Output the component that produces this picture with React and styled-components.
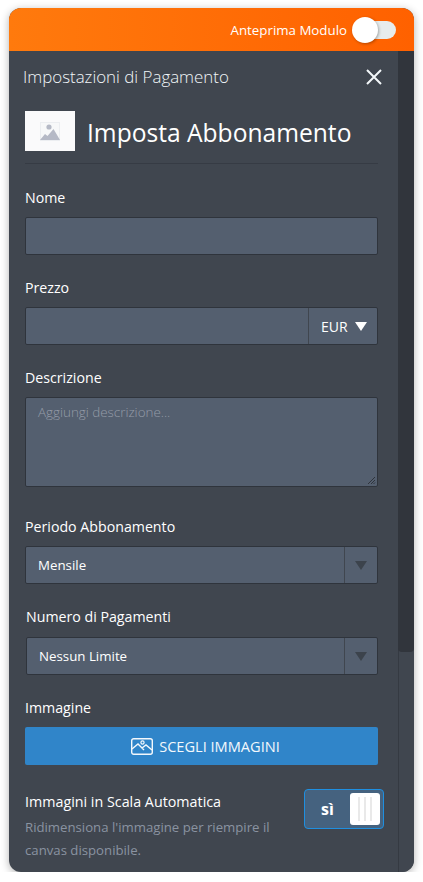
import React from 'react';
import styled, { createGlobalStyle } from 'styled-components';

const GlobalStyle = createGlobalStyle`
  html, body {
    margin: 0;
    padding: 0;
    background: #fff;
  }
  * {
    box-sizing: border-box;
  }
`;

const Card = styled.div`
  width: 405px;
  height: 864px;
  margin: 8px 0 0 9px;
  border-radius: 12px;
  overflow: hidden;
  display: flex;
  flex-direction: column;
  background: #40464f;
  box-shadow: 0 2px 8px rgba(0, 0, 0, 0.3);
  font-family: "Open Sans", "Noto Sans", sans-serif;
  color: #fff;
`;

const TopBar = styled.div`
  height: 43px;
  flex: none;
  display: flex;
  align-items: center;
  justify-content: flex-end;
  gap: 5px;
  padding-right: 18px;
  background: linear-gradient(90deg, #ff7a0d 0%, #ff6100 100%);
  font-size: 13.3px;
`;

const PreviewToggle = styled.div`
  position: relative;
  width: 44px;
  height: 26px;
  display: flex;
  align-items: center;
  justify-content: flex-end;
`;

const PreviewTrack = styled.div`
  width: 36px;
  height: 18px;
  border-radius: 9px;
  background: #e7ecec;
`;

const PreviewKnob = styled.div`
  position: absolute;
  left: 0;
  top: 0;
  width: 26px;
  height: 26px;
  border-radius: 50%;
  background: #fff;
  box-shadow: 1px 1px 3px rgba(0, 0, 0, 0.3);
`;

const Body = styled.div`
  flex: 1;
  display: flex;
  min-height: 0;
`;

const Content = styled.div`
  flex: 1;
  min-width: 0;
  padding: 0 20px 0 16px;
`;

const ScrollTrack = styled.div`
  width: 16px;
  flex: none;
  background: #40464f;
  border-left: 1px solid #353a42;
`;

const ScrollThumb = styled.div`
  height: 601px;
  margin-left: -1px;
  background: #31353c;
  border-radius: 0 0 4px 4px;
`;

const PanelHeader = styled.div`
  height: 52px;
  display: flex;
  align-items: center;
  justify-content: space-between;
  margin-left: -2px;
  margin-right: -4px;
`;

const PanelTitle = styled.div`
  font-size: 16.9px;
  font-weight: 300;
  padding-bottom: 2px;
  color: #f2f6f9;
`;

const CloseButton = styled.div`
  display: flex;
  width: 16px;
  height: 16px;
`;

const Heading = styled.div`
  height: 53px;
  margin-top: 8px;
  padding-bottom: 12px;
  display: flex;
  align-items: center;
  gap: 12px;
  border-bottom: 1px solid #363b44;
`;

const Thumb = styled.div`
  width: 50px;
  height: 40px;
  background: #fafafb;
  display: flex;
  align-items: center;
  justify-content: center;
`;

const HeadingText = styled.div`
  font-size: 24.6px;
  line-height: 32px;
  margin-top: 4px;
  white-space: nowrap;
`;

const Field = styled.div`
  margin-top: ${(p) => p.$top}px;
  margin-left: ${(p) => p.$left || 0}px;
`;

const Label = styled.div`
  font-size: 14.2px;
  line-height: 20px;
  margin-bottom: ${(p) => p.$gap || 9}px;
  color: #fff;
`;

const InputBox = styled.div`
  height: ${(p) => p.$height || 38}px;
  background: #545f6f;
  border: 1px solid #2f343c;
  border-radius: 2px;
  display: flex;
  align-items: stretch;
`;

const InputText = styled.div`
  flex: 1;
  display: flex;
  align-items: center;
  padding-left: 12px;
  font-size: 13.3px;
`;

const CurrencyBox = styled.div`
  width: 69px;
  flex: none;
  border-left: 1px solid #40464f;
  display: flex;
  align-items: center;
  gap: 7px;
  padding-left: 12px;
  font-size: 14px;
`;

const SelectArrow = styled.div`
  width: 33px;
  flex: none;
  border-left: 1px solid #40464f;
  display: flex;
  align-items: center;
  justify-content: center;
`;

const Triangle = styled.div`
  width: 0;
  height: 0;
  border-left: 6px solid transparent;
  border-right: 6px solid transparent;
  border-top: 9px solid ${(p) => p.$color};
`;

const TextArea = styled(InputBox)`
  position: relative;
  padding: 4px 12px;
  font-size: 13.4px;
  line-height: 20px;
  color: #959ca8;
  font-weight: 300;
`;

const ResizeGrip = styled.svg`
  position: absolute;
  right: 1px;
  bottom: 1px;
`;

const ChooseButton = styled.div`
  height: 38px;
  padding-left: 8px;
  background: #3085c9;
  border-radius: 2px;
  display: flex;
  align-items: center;
  justify-content: center;
  gap: 6px;
  font-size: 14.6px;
  color: #f3f8fc;
`;

const ToggleRow = styled.div`
  margin-top: 27px;
  margin-right: -6px;
  display: flex;
  align-items: flex-start;
  justify-content: space-between;
`;

const ToggleText = styled.div`
  width: 270px;
`;

const ToggleTitle = styled.div`
  font-size: 14.3px;
  line-height: 20px;
  color: #fff;
`;

const ToggleHint = styled.div`
  margin-top: 4px;
  font-size: 13.2px;
  line-height: 23px;
  color: #8a93a1;
`;

const YesToggle = styled.div`
  width: 80px;
  height: 40px;
  margin-top: -3px;
  padding: 3px;
  background: #45627f;
  border: 1px solid #1f8fe0;
  border-radius: 4px;
  display: flex;
  align-items: center;
  font-size: 16px;
  font-weight: 700;
`;

const YesLabel = styled.div`
  flex: 1;
  text-align: center;
  padding-right: 3px;
`;

const YesKnob = styled.div`
  width: 30px;
  height: 32px;
  background: #fff;
  border-radius: 3px;
  display: flex;
  align-items: center;
  justify-content: center;
  gap: 4px;
`;

const KnobLine = styled.div`
  width: 2px;
  height: 24px;
  background: #e9e9e9;
`;

function SelectField({ label, value, top, left, gap }) {
  return (
    <Field $top={top} $left={left}>
      <Label $gap={gap}>{label}</Label>
      <InputBox>
        <InputText>{value}</InputText>
        <SelectArrow>
          <Triangle $color="#3c434c" />
        </SelectArrow>
      </InputBox>
    </Field>
  );
}

export default function App() {
  return (
    <>
      <GlobalStyle />
      <Card>
        <TopBar>
          Anteprima Modulo
          <PreviewToggle>
            <PreviewTrack />
            <PreviewKnob />
          </PreviewToggle>
        </TopBar>
        <Body>
          <Content>
            <PanelHeader>
              <PanelTitle>Impostazioni di Pagamento</PanelTitle>
              <CloseButton>
                <svg width="16" height="16" viewBox="0 0 16 16">
                  <path d="M1 1l14 14M15 1L1 15" stroke="#f3f7fa" strokeWidth="2" fill="none" />
                </svg>
              </CloseButton>
            </PanelHeader>
            <Heading>
              <Thumb>
                <svg width="20" height="19" viewBox="0 0 20 19">
                  <rect x="0" y="0" width="20" height="19" fill="#eceef1" />
                  <rect x="1" y="1" width="18" height="17" fill="#f7f8f9" />
                  <path d="M0 18l5-6 2.500 2 6-7 6.500 11z" fill="#b5b9c6" />
                  <circle cx="9" cy="5" r="2.600" fill="#b5b9c6" />
                </svg>
              </Thumb>
              <HeadingText>Imposta Abbonamento</HeadingText>
            </Heading>
            <Field $top={24}>
              <Label>Nome</Label>
              <InputBox />
            </Field>
            <Field $top={23}>
              <Label>Prezzo</Label>
              <InputBox>
                <InputText />
                <CurrencyBox>
                  EUR
                  <Triangle $color="#fff" />
                </CurrencyBox>
              </InputBox>
            </Field>
            <Field $top={23}>
              <Label>Descrizione</Label>
              <TextArea $height={90}>
                Aggiungi descrizione...
                <ResizeGrip width="9" height="9" viewBox="0 0 9 9">
                  <path d="M8 1L1 8M8 4L4 8M8 6.500L6.500 8" stroke="#2f343c" strokeWidth="1" />
                </ResizeGrip>
              </TextArea>
            </Field>
            <SelectField label="Periodo Abbonamento" value="Mensile" top={30} />
            <SelectField label="Numero di Pagamenti" value="Nessun Limite" top={23} left={1} gap={10} />
            <Field $top={23}>
              <Label>Immagine</Label>
              <ChooseButton>
                <svg width="22" height="17" viewBox="0 0 22 17">
                  <rect x="0.700" y="0.700" width="20.600" height="15.600" rx="2" fill="none" stroke="#f3f8fc" strokeWidth="1.400" />
                  <path d="M1 11l6-5 6 6M11 10l4-3 6 5" fill="none" stroke="#f3f8fc" strokeWidth="1.400" />
                  <circle cx="11.500" cy="4.500" r="1.600" fill="none" stroke="#f3f8fc" strokeWidth="1.200" />
                </svg>
                SCEGLI IMMAGINI
              </ChooseButton>
            </Field>
            <ToggleRow>
              <ToggleText>
                <ToggleTitle>Immagini in Scala Automatica</ToggleTitle>
                <ToggleHint>Ridimensiona l'immagine per riempire il canvas disponibile.</ToggleHint>
              </ToggleText>
              <YesToggle>
                <YesLabel>sì</YesLabel>
                <YesKnob>
                  <KnobLine />
                  <KnobLine />
                  <KnobLine />
                </YesKnob>
              </YesToggle>
            </ToggleRow>
          </Content>
          <ScrollTrack>
            <ScrollThumb />
          </ScrollTrack>
        </Body>
      </Card>
    </>
  );
}
